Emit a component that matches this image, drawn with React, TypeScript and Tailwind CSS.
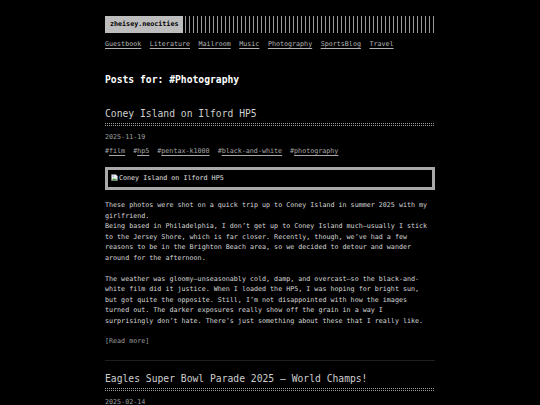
const mono = "font-['DejaVu_Sans_Mono','Liberation_Mono',monospace]";

const nav = ["Guestbook", "Literature", "Mailroom", "Music", "Photography", "SportsBlog", "Travel"];
const tags = ["film", "hp5", "pentax-k1000", "black-and-white", "photography"];

function Dotted() {
  return (
    <div className="h-[3px] w-full bg-[linear-gradient(to_bottom,transparent_1px,#000_1px,#000_2px,transparent_2px),repeating-linear-gradient(90deg,#9a9a9a_0,#9a9a9a_1px,transparent_1px,transparent_2px)]" />
  );
}

function BrokenImage() {
  return (
    <svg width="7" height="7" viewBox="0 0 16 16" className="inline-block mr-[1px] align-[-1px]">
      <path d="M1 1h10l4 4v10H1z" fill="#eee" stroke="#888" strokeWidth="1" />
      <path d="M2 14l4-5 3 3 2-2 3 4z" fill="#4a9a4a" />
      <circle cx="5" cy="5" r="1.5" fill="#5b8fd6" />
    </svg>
  );
}

export default function App() {
  return (
    <div className={`min-h-[405px] bg-black ${mono} antialiased text-[6.7px] leading-[10.5px] text-[#d6d6d6]`}>
      <div className="mx-auto w-[330px] pt-4">
        <header className="flex h-[17px]">
          <div className="flex items-center bg-[#bdbdbd] px-[5px] font-bold text-black">zheisey.neocities</div>
          <div className="ml-[1px] flex-1 bg-[repeating-linear-gradient(90deg,transparent_0,transparent_1.5px,#9a9a9a_1.5px,#9a9a9a_2.5px,transparent_2.5px,transparent_4px)] mr-[-2px]" />
        </header>

        <nav className="mt-[5.5px] flex gap-[8.5px] text-[#b4b4b4]">
          {nav.map((n) => (
            <a key={n} className="underline underline-offset-[1.5px]">{n}</a>
          ))}
        </nav>

        <h1 className="mt-[22.5px] text-[9.7px] leading-[15px] font-bold text-white">Posts for: #Photography</h1>

        <article className="mt-[19px]">
          <h2 className="text-[9.7px] leading-[15px] text-[#cfcfcf]">Coney Island on Ilford HP5</h2>
          <div className="mt-[2.5px]"><Dotted /></div>
          <div className="mt-[5.5px] text-[#a2a2a2]">2025-11-19</div>
          <div className="mt-[3.5px] flex gap-[8px] text-[#a8a8a8]">
            {tags.map((t) => (
              <span key={t}>#<a className="underline underline-offset-[1.5px]">{t}</a></span>
            ))}
          </div>
          <div className="mt-[11px] border-[3px] border-[#a9a9a9] p-[3px] text-[#e0e0e0]">
            <BrokenImage />Coney Island on Ilford HP5
          </div>
          <p className="mt-[10.5px]">
            These photos were shot on a quick trip up to Coney Island in summer 2025 with my girlfriend.
            <br />
            Being based in Philadelphia, I don’t get up to Coney Island much—usually I stick to the Jersey Shore, which is far closer. Recently, though, we’ve had a few reasons to be in the Brighton Beach area, so we decided to detour and wander around for the afternoon.
          </p>
          <p className="mt-[10.5px]">
            The weather was gloomy—unseasonably cold, damp, and overcast—so the black-and-white film did it justice. When I loaded the HP5, I was hoping for bright sun, but got quite the opposite. Still, I’m not disappointed with how the images turned out. The darker exposures really show off the grain in a way I surprisingly don’t hate. There’s just something about these that I really like.
          </p>
          <p className="mt-[10px] text-[#9c9c9c]">[Read more]</p>
        </article>

        <div className="mt-[13px] h-px bg-[#1e1e1e]" />

        <article className="mt-[10px]">
          <h2 className="text-[9.7px] leading-[15px] text-[#cfcfcf]">Eagles Super Bowl Parade 2025 — World Champs!</h2>
          <div className="mt-[2.5px]"><Dotted /></div>
          <div className="mt-[5.5px] text-[#a2a2a2]">2025-02-14</div>
        </article>
      </div>
    </div>
  );
}
